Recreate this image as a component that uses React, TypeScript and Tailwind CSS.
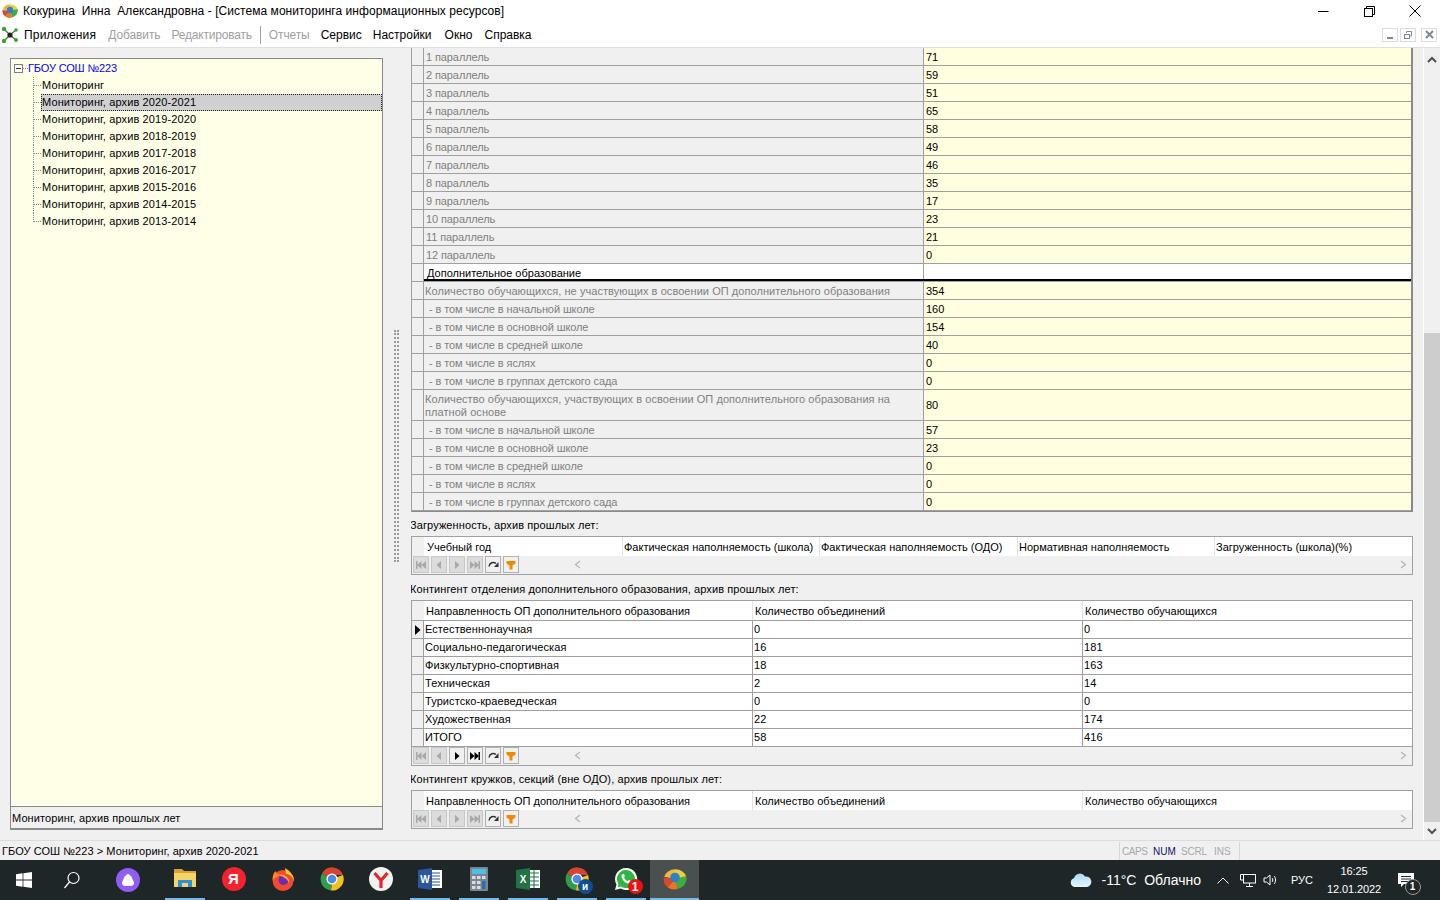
import React from "react";

const F = "font-['Liberation_Sans',sans-serif]";
const LINE = "border-[#a0a0a0]";

function AppIcon({ s = 16 }: { s?: number }) {
  return (
    <svg width={s} height={s} viewBox="0 0 16 16">
      <path d="M8 8 L0.8 6.5 A7.5 6.5 0 0 1 8 1.5 Z" fill="#f0b93a" />
      <path d="M8 8 L8 1.5 A7.5 6.5 0 0 1 15.5 6.5 Z" fill="#e8d040" />
      <path d="M8 8 L15.5 6 A7.5 7 0 0 1 10 14.5 Z" fill="#3fae3c" />
      <path d="M8 8 L10 14.5 A7.5 7 0 0 1 3 13.5 Z" fill="#e8752a" />
      <path d="M8 8 L3 13.5 A7.5 7 0 0 1 0.6 7 Z" fill="#d9482b" />
      <circle cx="8" cy="7" r="3.2" fill="#2f7fc9" />
    </svg>
  );
}

function MenuIcon() {
  return (
    <svg width="18" height="18" viewBox="0 0 18 18">
      <g stroke="#3d7a2e" strokeWidth="1.2">
        <path d="M9 9 L3 3 M9 9 L15 4 M9 9 L3 15 M9 9 L15 14" />
      </g>
      <circle cx="9" cy="9" r="2.6" fill="#222" />
      <circle cx="3" cy="3" r="2.2" fill="#3aa335" />
      <circle cx="15" cy="4" r="1.8" fill="#3aa335" />
      <circle cx="3" cy="15" r="2.2" fill="#3aa335" />
      <circle cx="15" cy="14" r="2" fill="#3aa335" />
    </svg>
  );
}

function TitleBar() {
  return (
    <div className="h-[22px] bg-white flex items-center">
      <div className="w-[23px] pl-[2px] flex items-center"><AppIcon /></div>
      <div className="flex-1 text-[12px] text-black whitespace-pre tracking-[0.05px]">Кокурина  Инна  Александровна - [Система мониторинга информационных ресурсов]</div>
      <div className="flex items-center h-full pr-[2px]">
        <div className="w-[46px] h-full flex items-center justify-center">
          <svg width="11" height="11" viewBox="0 0 11 11"><path d="M0 5.5H10.5" stroke="#000" /></svg>
        </div>
        <div className="w-[46px] h-full flex items-center justify-center">
          <svg width="11" height="11" viewBox="0 0 11 11" fill="none" stroke="#000"><rect x="0.5" y="2.5" width="8" height="8" /><path d="M2.5 2.5V0.5H10.5V8.5H8.5" /></svg>
        </div>
        <div className="w-[46px] h-full flex items-center justify-center">
          <svg width="12" height="12" viewBox="0 0 12 12" stroke="#000"><path d="M0.5 0.5L11.5 11.5M11.5 0.5L0.5 11.5" /></svg>
        </div>
      </div>
    </div>
  );
}

function MdiBtn({ children, w = "w-[16px]" }: { children: React.ReactNode; w?: string }) {
  return <div className={`${w} h-[14px] border border-[#dcdcdc] flex items-center justify-center bg-white`}>{children}</div>;
}

function MenuBar() {
  const item = "text-[12px]";
  return (
    <div className="h-[26px] bg-white border-b border-[#e0e0e0] flex items-center">
      <div className="w-[24px] pl-[1px] flex items-center"><MenuIcon /></div>
      <span className={`${item} tracking-[0.2px] text-black`}>Приложения</span>
      <span className={`${item} text-[#a0a0a0] ml-[12px] -tracking-[0.1px]`}>Добавить</span>
      <span className={`${item} text-[#a0a0a0] ml-[11px] -tracking-[0.2px]`}>Редактировать</span>
      <span className="w-px h-[18px] bg-[#a0a0a0] ml-[8px]" />
      <span className={`${item} text-[#a0a0a0] ml-[8px] -tracking-[0.1px]`}>Отчеты</span>
      <span className={`${item} text-black ml-[11px]`}>Сервис</span>
      <span className={`${item} text-black ml-[11px]`}>Настройки</span>
      <span className={`${item} text-black ml-[13px]`}>Окно</span>
      <span className={`${item} text-black ml-[12px]`}>Справка</span>
      <div className="ml-auto mr-[3px] flex items-center gap-[2px]">
        <MdiBtn><svg width="8" height="8" viewBox="0 0 8 8"><rect x="1" y="6" width="6" height="2" fill="#7a8a9a" /></svg></MdiBtn>
        <MdiBtn><svg width="10" height="10" viewBox="0 0 10 10" fill="none" stroke="#7a8a9a"><rect x="1.5" y="4.5" width="5" height="4" /><path d="M3.5 3V1.5H8.5V6H7" /></svg></MdiBtn>
        <div className="w-[1px]" />
        <MdiBtn><svg width="9" height="9" viewBox="0 0 9 9" stroke="#7a8a9a" strokeWidth="2"><path d="M1 1L8 8M8 1L1 8" /></svg></MdiBtn>
      </div>
    </div>
  );
}

const treeItems = [
  "Мониторинг",
  "Мониторинг, архив 2020-2021",
  "Мониторинг, архив 2019-2020",
  "Мониторинг, архив 2018-2019",
  "Мониторинг, архив 2017-2018",
  "Мониторинг, архив 2016-2017",
  "Мониторинг, архив 2015-2016",
  "Мониторинг, архив 2014-2015",
  "Мониторинг, архив 2013-2014",
];

function LeftPanel() {
  return (
    <div className="w-[373px] h-[772px] mt-[10px] ml-[10px] border border-[#8a8a8a] border-b-2 flex flex-col">
      <div className="flex-1 bg-[#ffffe8] pt-[1px] pl-[3px]">
        <div className="h-[17px] flex items-center">
          <div className="w-[9px] h-[9px] border border-[#808080] bg-white flex items-center justify-center">
            <div className="w-[5px] h-px bg-[#333]" />
          </div>
          <div className="w-[5px] border-b border-dotted border-[#888]" />
          <span className="text-[11px] text-[#0000ff] tracking-[-0.15px]">ГБОУ СОШ №223</span>
        </div>
        <div className="ml-[19px]">
          {treeItems.map((t, i) => (
            <div key={t} className="flex h-[17px]">
              <div className={`w-[8px] border-l border-dotted border-[#888] ${i === treeItems.length - 1 ? "h-[9px]" : "h-full"}`}>
                <div className="h-[9px] border-b border-dotted border-[#888]" />
              </div>
              {i === 1 ? (
                <div className="flex-1 bg-[#d0d0d0] outline-1 outline-dotted outline-[#222] -outline-offset-1 text-[11px] tracking-[0.12px] pl-px text-black flex items-center">{t}</div>
              ) : (
                <div className="text-[11px] tracking-[0.12px] pl-px text-black flex items-center">{t}</div>
              )}
            </div>
          ))}
        </div>
      </div>
      <div className="h-[22px] border-t border-[#8a8a8a] bg-[#f0f0f0] pl-px pt-px flex items-center text-[11px] tracking-[0.1px] text-black">Мониторинг, архив прошлых лет</div>
    </div>
  );
}

type R = { l: string; v: string; h?: number; black?: boolean; ind?: boolean };

const sub = (v: string, l: string): R => ({ l, v, ind: true });

const rows: R[] = [
  ...[71, 59, 51, 65, 58, 49, 46, 35, 17, 23, 21, 0].map((v, i) => sub(String(v), `${i + 1} параллель`)),
  { l: "Дополнительное образование", v: "", black: true },
  { l: "Количество обучающихся, не участвующих в освоении ОП дополнительного образования", v: "354" },
  sub("160", "- в том числе в начальной школе"),
  sub("154", "- в том числе в основной школе"),
  sub("40", "- в том числе в средней школе"),
  sub("0", "- в том числе в яслях"),
  sub("0", "- в том числе в группах детского сада"),
  { l: "Количество обучающихся, участвующих в освоении ОП дополнительного образования на платной основе", v: "80", h: 31 },
  sub("57", "- в том числе в начальной школе"),
  sub("23", "- в том числе в основной школе"),
  sub("0", "- в том числе в средней школе"),
  sub("0", "- в том числе в яслях"),
  sub("0", "- в том числе в группах детского сада"),
];

function MainTable() {
  return (
    <div className={`border-l border-r-2 ${LINE} border-r-[#8a8a8a] border-b border-b-[#8a8a8a]`}>
      {rows.map((r, i) =>
        r.black ? (
          <div key={i} className="h-[18px] flex">
            <div className={`w-[12px] shrink-0 bg-[#f0f0f0] border-r border-b ${LINE}`} />
            <div className={`flex-1 flex flex-col border-b ${LINE}`}>
              <div className="flex-1 flex">
                <div className={`w-[500px] shrink-0 bg-white border-r ${LINE} pl-[3px] pt-[3px] h-[15px] flex items-center text-[11px] text-black`}>{r.l}</div>
                <div className="flex-1 bg-white" />
              </div>
              <div className="h-[2px] bg-black" />
            </div>
          </div>
        ) : (
          <div key={i} style={{ height: r.h ?? 18 }} className={`flex border-b ${LINE}`}>
            <div className={`w-[12px] shrink-0 bg-[#f0f0f0] border-r ${LINE}`} />
            <div className={`w-[500px] shrink-0 bg-[#f0f0f0] border-r ${LINE} ${r.ind ? "pl-[2px] -tracking-[0.1px]" : "pl-px tracking-[0.06px]"} pt-[1px] pr-[20px] flex items-center text-[11px] leading-[13px] text-[#808080]`}>
              <span className={r.l.startsWith("-") ? "pl-[3px]" : ""}>{r.l}</span>
            </div>
            <div className={`flex-1 bg-[#ffffe0] pl-[2px] ${r.h ? "" : "pt-[1px]"} flex items-center text-[11px] text-black`}>{r.v}</div>
          </div>
        )
      )}
    </div>
  );
}

function NavBtn({ children, on }: { children?: React.ReactNode; on?: boolean }) {
  return (
    <div className={`w-[16px] h-[17px] border flex items-center justify-center ${on ? "bg-[#f0f0f0] border-[#b0b0b0]" : "bg-[#dcdcdc] border-[#c8c8c8]"}`}>
      {children}
    </div>
  );
}

function Tri({ dir, c, bar }: { dir: "l" | "r"; c: string; bar?: "double" }) {
  const p = dir === "r" ? "M3 1L7.5 5L3 9Z" : "M7 1L2.5 5L7 9Z";
  return (
    <svg width="10" height="10" viewBox="0 0 10 10" fill={c}>
      {bar ? (
        dir === "r" ? (
          <>
            <path d="M0 1L4.5 5L0 9Z" /><path d="M4.5 1L9 5L4.5 9Z" /><rect x="8.5" y="1" width="1.5" height="8" />
          </>
        ) : (
          <>
            <rect x="0" y="1" width="1.5" height="8" /><path d="M5.5 1L1 5L5.5 9Z" /><path d="M10 1L5.5 5L10 9Z" />
          </>
        )
      ) : (
        <path d={p} />
      )}
    </svg>
  );
}

function NavBar({ active }: { active?: boolean }) {
  const dis = "#a8a8a8";
  return (
    <div className="h-[18px] bg-[#f0f0f0] flex items-start pl-[1px] gap-[2px]">
      <NavBtn><Tri dir="l" c={dis} bar="double" /></NavBtn>
      <NavBtn><Tri dir="l" c={dis} /></NavBtn>
      <NavBtn on={active}><Tri dir="r" c={active ? "#000" : dis} /></NavBtn>
      <NavBtn on={active}><Tri dir="r" c={active ? "#000" : dis} bar="double" /></NavBtn>
      <NavBtn on>
        <svg width="11" height="9" viewBox="0 0 11 9" fill="none">
          <path d="M1 6.5C1.5 2.5 5.5 1.5 8 3.5" stroke="#333" strokeWidth="1.4" />
          <path d="M10.5 2V7H6Z" fill="#333" />
        </svg>
      </NavBtn>
      <NavBtn on>
        <svg width="10" height="10" viewBox="0 0 10 10"><path d="M0.5 1H9.5V3.5L6.5 5.5V9.5H3.5V5.5L0.5 3.5Z" fill="#f08a00" /></svg>
      </NavBtn>
      <div className="ml-[53px] h-[17px] w-[8px] flex items-center">
        <svg width="7" height="9" viewBox="0 0 7 9" fill="none" stroke="#b8b8b8" strokeWidth="1.4"><path d="M6 1L1.5 4.5L6 8" /></svg>
      </div>
      <div className="ml-auto h-[17px] mr-[5px] flex items-center">
        <svg width="7" height="9" viewBox="0 0 7 9" fill="none" stroke="#b8b8b8" strokeWidth="1.4"><path d="M1 1L5.5 4.5L1 8" /></svg>
      </div>
    </div>
  );
}

function Label({ children, className = "" }: { children: React.ReactNode; className?: string }) {
  return <div className={`text-[11px] text-black h-[14px] leading-[14px] tracking-[0.1px] ${className}`}>{children}</div>;
}

function GridHeader({ cols, grid, h, first, rest }: { cols: string[]; grid: string; h: string; first: string; rest: string }) {
  return (
    <div className={`${h} flex`}>
      <div className="w-[12px] bg-[#f0f0f0] shrink-0" />
      <div className={`flex-1 grid ${grid} bg-white`}>
        {cols.map((c, i) => (
          <div key={c} className={`flex items-center text-[11px] text-black whitespace-nowrap pt-[1px] ${i > 0 ? `border-l border-[#e4e4e4] ${rest}` : first}`}>{c}</div>
        ))}
      </div>
    </div>
  );
}

const g3 = [
  ["Естественнонаучная", "0", "0"],
  ["Социально-педагогическая", "16", "181"],
  ["Физкультурно-спортивная", "18", "163"],
  ["Техническая", "2", "14"],
  ["Туристско-краеведческая", "0", "0"],
  ["Художественная", "22", "174"],
  ["ИТОГО", "58", "416"],
];
const COL3 = "grid-cols-[328px_330px_1fr]";
const HDR3 = ["Направленность ОП дополнительного образования", "Количество объединений", "Количество обучающихся"];

function RightPanel() {
  return (
    <div className="w-[1002px] h-[792px] overflow-hidden flex flex-col">
      <MainTable />
      <Label className="mt-[6px] -ml-px">Загруженность, архив прошлых лет:</Label>
      <div className="mt-[4px] h-[39px] border border-[#a0a0a0] flex flex-col">
        <GridHeader h="h-[20px]" first="pl-[3px]" rest="pl-[1px]" grid="grid-cols-[198px_197px_198px_197px_1fr]" cols={["Учебный год", "Фактическая наполняемость (школа)", "Фактическая наполняемость (ОДО)", "Нормативная наполняемость", "Загруженность (школа)(%)"]} />
        <NavBar />
      </div>
      <Label className="mt-[7px] -ml-px">Контингент отделения дополнительного образования, архив прошлых лет:</Label>
      <div className="mt-[4px] h-[166px] border border-[#a0a0a0] flex flex-col">
        <GridHeader h="h-[19px]" first="pl-[2px]" rest="pl-[2px]" grid={COL3} cols={HDR3} />
        {g3.map((r, i) => (
          <div key={r[0]} className={`h-[18px] flex border-t ${LINE}`}>
            <div className={`w-[12px] shrink-0 bg-[#f0f0f0] border-r ${LINE} flex items-center justify-center`}>
              {i === 0 && <svg width="7" height="10" viewBox="0 0 7 10"><path d="M1 0L6.5 5L1 10Z" fill="#000" /></svg>}
            </div>
            <div className={`flex-1 grid ${COL3} bg-white`}>
              {r.map((c, j) => (
                <div key={j} className={`flex items-center text-[11px] tracking-[0.08px] text-black pl-px ${j > 0 ? `border-l ${LINE}` : ""}`}>{c}</div>
              ))}
            </div>
          </div>
        ))}
        <div className={`border-t ${LINE} mt-auto`}><NavBar active /></div>
      </div>
      <Label className="mt-[6px] -ml-px">Контингент кружков, секций (вне ОДО), архив прошлых лет:</Label>
      <div className="mt-[4px] h-[39px] border border-[#a0a0a0] flex flex-col">
        <GridHeader h="h-[20px]" first="pl-[2px]" rest="pl-[2px]" grid={COL3} cols={HDR3} />
        <NavBar />
      </div>
    </div>
  );
}

function Splitter() {
  return (
    <div className="w-[28px] h-full flex justify-center pt-[282px] pr-[2px]">
      <div className="w-[5px] h-[232px] border-x-2 border-dotted border-[#9a9a9a]" />
    </div>
  );
}

function ScrollBar() {
  return (
    <div className="w-[17px] h-full border-l border-white bg-[#f0f0f0] flex flex-col">
      <div className="h-[20px] flex items-center justify-center pt-[2px]">
        <svg width="10" height="7" viewBox="0 0 10 7" fill="none" stroke="#505050" strokeWidth="2"><path d="M1 6L5 2L9 6" /></svg>
      </div>
      <div className="h-[265px]" />
      <div className="h-[489px] bg-[#cdcdcd]" />
      <div className="flex-1 flex items-center justify-center">
        <svg width="10" height="7" viewBox="0 0 10 7" fill="none" stroke="#505050" strokeWidth="2"><path d="M1 1L5 5L9 1" /></svg>
      </div>
    </div>
  );
}

function StatusBar() {
  return (
    <div className="h-[20px] bg-[#f0f0f0] border-t border-[#dcdcdc] flex items-center text-[11px] pt-px">
      <div className="pl-[2px] w-[1119px] tracking-[0.05px] text-black">ГБОУ СОШ №223 &gt; Мониторинг, архив 2020-2021</div>
      <div className="w-[121px] h-[18px] border-x border-[#d8d8d8] flex items-center text-[10px] text-[#a8a8a8] pl-[2px] whitespace-nowrap">
        <span className="w-[31px] tracking-[-0.4px]">CAPS</span>
        <span className="w-[28px] text-[#10106a]">NUM</span>
        <span className="w-[33px] tracking-[-0.2px]">SCRL</span>
        <span>INS</span>
      </div>
    </div>
  );
}

const Cell = ({ children, active, line }: { children: React.ReactNode; active?: boolean; line?: boolean }) => (
  <div className={`w-[49px] h-full flex flex-col items-center ${active ? "bg-[#4a4f50]" : ""}`}>
    <div className="flex-1 flex items-center justify-center">{children}</div>
    {active ? <div className="h-[2px] w-full bg-[#76b9ed]" /> : line ? <div className="h-[2px] w-[40px] bg-[#76b9ed]" /> : <div className="h-[2px]" />}
  </div>
);

function Chrome({ s = 24 }: { s?: number }) {
  return (
    <svg width={s} height={s} viewBox="0 0 24 24">
      <path d="M12 12L2 6.5A11.5 11.5 0 0 1 23 8H12Z" fill="#d9442f" />
      <path d="M12 12L23 8A11.5 11.5 0 0 1 11 23.5Z" fill="#f2c21a" />
      <path d="M12 12L11 23.5A11.5 11.5 0 0 1 2 6.5Z" fill="#2f9e4a" />
      <circle cx="12" cy="12" r="5.6" fill="#fff" />
      <circle cx="12" cy="12" r="4.3" fill="#4a8be8" />
    </svg>
  );
}

function Taskbar() {
  return (
    <div className="h-[40px] bg-[#1f2627] flex items-stretch text-white">
      <div className="w-[48px] flex items-center justify-center">
        <svg width="16" height="16" viewBox="0 0 16 16" fill="#fff"><path d="M0 2.3L6.6 1.3V7.6H0ZM7.4 1.2L16 0V7.6H7.4ZM0 8.4H6.6V14.7L0 13.7ZM7.4 8.4H16V16L7.4 14.8Z" /></svg>
      </div>
      <div className="w-[48px] flex items-center justify-center">
        <svg width="18" height="18" viewBox="0 0 18 18" fill="none" stroke="#fff" strokeWidth="1.2"><circle cx="10.5" cy="7" r="5.5" /><path d="M6.5 11L1.5 17" /></svg>
      </div>
      <div className="w-[8px]" />
      <div className="w-[48px] flex items-center justify-center">
        <svg width="24" height="24" viewBox="0 0 24 24"><circle cx="12" cy="12" r="12" fill="#8f5cf5" /><path d="M12 6C14.5 6 18 13 18 15.5C18 17.5 16 18 12 18C8 18 6 17.5 6 15.5C6 13 9.5 6 12 6Z" fill="#fff" /></svg>
      </div>
      <div className="w-[8px]" />
      <Cell line>
        <svg width="22" height="20" viewBox="0 0 22 20">
          <path d="M0 0H8L10 2H22V18H0Z" fill="#d9a531" />
          <rect x="0" y="4" width="22" height="14" fill="#f6d365" />
          <path d="M4 18V11H18V18H14V14H8V18Z" fill="#2e8fdc" />
        </svg>
      </Cell>
      <Cell>
        <div className="w-[24px] h-[24px] rounded-full bg-[#f5222d] flex items-center justify-center text-[15px] font-bold text-white">Я</div>
      </Cell>
      <Cell>
        <svg width="24" height="24" viewBox="0 0 24 24">
          <circle cx="12" cy="13.5" r="10.5" fill="#f4482f" />
          <path d="M14 1C19 4 24 9 23 15C22 9 18 7 15 7Z" fill="#ffc22e" />
          <path d="M1.5 13C1.5 8 3 5 5 4C5 7 7 8 10 7Z" fill="#ff8a1e" />
          <circle cx="12.5" cy="13" r="5" fill="#6a2bb8" />
          <path d="M8 8C13 6 19 10 18 16C16 11 12 10 8 8Z" fill="#ffa82e" />
        </svg>
      </Cell>
      <Cell><Chrome /></Cell>
      <Cell>
        <svg width="24" height="24" viewBox="0 0 24 24"><circle cx="12" cy="12" r="12" fill="#f2f2f2" /><path d="M5.5 6L12 13.5V21M18.5 6L12 13.5" fill="none" stroke="#e3262e" strokeWidth="3.2" /></svg>
      </Cell>
      <Cell line>
        <svg width="24" height="24" viewBox="0 0 24 24">
          <rect x="9" y="3" width="15" height="18" fill="#fff" />
          <path d="M14 6H22M14 9H22M14 12H22M14 15H22M14 18H22" stroke="#2b579a" />
          <path d="M0 3L14 1V23L0 21Z" fill="#2b579a" />
          <text x="7" y="16" textAnchor="middle" fontSize="10" fontWeight="700" fill="#fff" fontFamily="Liberation Sans">W</text>
        </svg>
      </Cell>
      <Cell line>
        <svg width="18" height="24" viewBox="0 0 18 24">
          <rect width="18" height="24" rx="1" fill="#7b868e" />
          <rect x="2" y="2" width="14" height="5" fill="#49c1e8" />
          <g fill="#d7dde2">
            <rect x="2" y="9" width="3.5" height="3" /><rect x="7" y="9" width="3.5" height="3" /><rect x="12" y="9" width="3.5" height="3" />
            <rect x="2" y="14" width="3.5" height="3" /><rect x="7" y="14" width="3.5" height="3" />
            <rect x="2" y="19" width="3.5" height="3" /><rect x="7" y="19" width="3.5" height="3" />
          </g>
          <rect x="12" y="14" width="3.5" height="8" fill="#2a6fb5" />
        </svg>
      </Cell>
      <Cell line>
        <svg width="24" height="24" viewBox="0 0 24 24">
          <rect x="9" y="3" width="15" height="18" fill="#fff" />
          <path d="M14 6H23M14 10H23M14 14H23M14 18H23M18 3V21" stroke="#217346" />
          <path d="M0 3L14 1V23L0 21Z" fill="#217346" />
          <text x="7" y="16" textAnchor="middle" fontSize="10" fontWeight="700" fill="#fff" fontFamily="Liberation Sans">X</text>
        </svg>
      </Cell>
      <Cell line>
        <div className="relative w-[24px] h-[24px]">
          <Chrome />
          <div className="absolute -right-[4px] -bottom-[3px] w-[15px] h-[15px] rounded-full bg-[#0f4f8f] text-white text-[10px] font-bold flex items-center justify-center">и</div>
        </div>
      </Cell>
      <Cell line>
        <div className="relative w-[24px] h-[24px]">
          <svg width="24" height="24" viewBox="0 0 24 24">
            <path d="M12 1A11 11 0 0 0 2.5 17.5L1 23L6.7 21.5A11 11 0 1 0 12 1Z" fill="#fff" />
            <path d="M12 3A9 9 0 0 0 4.5 17L3.7 20.3L7 19.5A9 9 0 1 0 12 3Z" fill="#2bb741" />
            <path d="M8.5 7C7 8 7 10 9 13C11 16 14 17 16 16.5C17 16 17.5 15 17 14.3L15 13L14 14C12 13.5 10.5 12 10 10L11 9L9.8 7Z" fill="#fff" />
          </svg>
          <div className="absolute -right-[5px] -bottom-[3px] w-[15px] h-[15px] rounded-full bg-[#ee1111] text-white text-[12px] font-bold flex items-center justify-center">1</div>
        </div>
      </Cell>
      <Cell active><AppIcon s={24} /></Cell>

      <div className="ml-auto flex items-center">
        <svg width="22" height="16" viewBox="0 0 22 16" className="mr-[10px]">
          <defs>
            <linearGradient id="cl" x1="0" y1="0" x2="0" y2="1"><stop offset="0" stopColor="#a8d8f8" /><stop offset="1" stopColor="#eaf6ff" /></linearGradient>
          </defs>
          <path d="M5 15A4.5 4.5 0 0 1 4 6.2A6 6 0 0 1 15 4.5A5 5 0 0 1 17 15Z" fill="url(#cl)" />
        </svg>
        <span className="text-[14px] whitespace-pre">-11°C  Облачно</span>
        <svg width="12" height="7" viewBox="0 0 12 7" fill="none" stroke="#fff" className="ml-[16px]"><path d="M0.5 6.5L6 1L11.5 6.5" /></svg>
        <svg width="16" height="14" viewBox="0 0 16 14" fill="none" stroke="#fff" className="ml-[11px]"><rect x="3.5" y="1.5" width="12" height="8.5" /><path d="M9.5 10V13M6 13.5H13M0.5 1.5H5M0.5 1.5V7H3" /></svg>
        <svg width="16" height="14" viewBox="0 0 16 14" fill="none" stroke="#fff" className="ml-[7px]"><path d="M1 5V9H3.5L7 12V2L3.5 5Z" /><path d="M9 5C10 6 10 8 9 9M11 3C13 5 13 9 11 11" /></svg>
        <span className="text-[11px] ml-[12px]">РУС</span>
        <div className="ml-[14px] w-[54px] flex flex-col items-center text-[11px] -tracking-[0.1px] leading-[18px]">
          <span>16:25</span>
          <span>12.01.2022</span>
        </div>
        <div className="w-[49px] mr-[10px] flex items-center justify-center">
          <div className="relative w-[16px] h-[15px]">
            <svg width="16" height="15" viewBox="0 0 16 15"><path d="M0 0H16V11H6L3 14V11H0Z" fill="#fff" /><path d="M3 3.5H13M3 6H13M3 8.5H10" stroke="#1f2627" /></svg>
            <div className="absolute left-[7px] top-[6px] w-[16px] h-[16px] rounded-full border border-[#999] bg-[#1f2627] text-[10px] font-bold flex items-center justify-center">1</div>
          </div>
        </div>
      </div>
    </div>
  );
}

export default function App() {
  return (
    <div className={`w-[1440px] h-[900px] overflow-hidden bg-[#f0f0f0] flex flex-col ${F}`}>
      <TitleBar />
      <MenuBar />
      <div className="h-[792px] flex">
        <LeftPanel />
        <Splitter />
        <RightPanel />
        <div className="w-[10px]" />
        <ScrollBar />
      </div>
      <StatusBar />
      <Taskbar />
    </div>
  );
}
